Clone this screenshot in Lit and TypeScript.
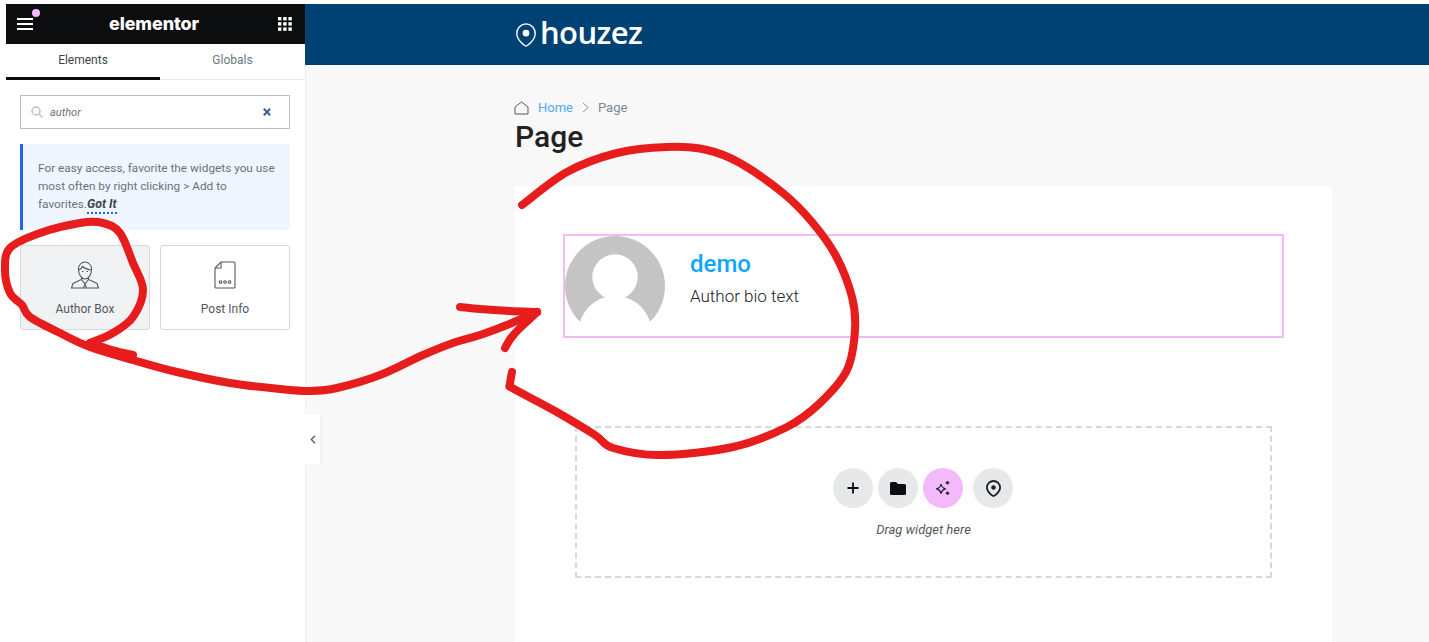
import { LitElement, html, css, svg } from "lit";
import { customElement } from "lit/decorators.js";

type Pt = [number, number];

/* Catmull-Rom through the points of a hand-drawn stroke, as cubic beziers. */
function smooth(p: Pt[]): string {
  let d = `M${p[0][0]} ${p[0][1]}`;
  for (let i = 0; i < p.length - 1; i++) {
    const a = p[Math.max(i - 1, 0)];
    const b = p[i];
    const c = p[i + 1];
    const e = p[Math.min(i + 2, p.length - 1)];
    const c1x = b[0] + (c[0] - a[0]) / 6;
    const c1y = b[1] + (c[1] - a[1]) / 6;
    const c2x = c[0] - (e[0] - b[0]) / 6;
    const c2y = c[1] - (e[1] - b[1]) / 6;
    d += `C${c1x.toFixed(1)} ${c1y.toFixed(1)} ${c2x.toFixed(1)} ${c2y.toFixed(1)} ${c[0]} ${c[1]}`;
  }
  return d;
}

const LOOP_HEAD: Pt[] = [[133, 355], [112, 350], [90, 343]];
const LOOP: Pt[] = [[90, 343], [113, 333], [133, 317], [143, 290], [133, 263], [120, 233], [103, 223], [80, 223], [40, 233], [10, 248], [5, 270], [10, 293], [22, 305], [30, 317], [60, 333], [90, 347], [133, 360], [177, 372], [230, 383], [280, 389], [310, 391], [337, 388], [380, 375], [423, 355], [453, 343], [480, 335], [507, 325], [537, 312]];
const ARROW_TOP: Pt[] = [[460, 307], [480, 309], [510, 311], [537, 312]];
const ARROW_LOW: Pt[] = [[537, 312], [520, 328], [511, 338], [505, 348]];
const RING: Pt[] = [[522, 205], [567, 172], [617, 153], [667, 147], [707, 150], [740, 163], [783, 193], [812, 222], [836, 256], [852, 297], [855, 330], [847, 370], [820, 403], [787, 427], [733, 447], [660, 455], [613, 448], [595, 435], [555, 411], [514, 389], [510, 385], [512, 372]];

@customElement("app-root")
export class AppRoot extends LitElement {
  static styles = css`
    :host { display: block; position: relative; width: 1429px; height: 642px; overflow: hidden; background: #fff; font-family: Roboto, "Liberation Sans", sans-serif; }
    * { box-sizing: border-box; }
    .page { display: flex; height: 642px; padding: 4px 0 0 6px; }
    .panel { width: 299px; flex: none; display: flex; flex-direction: column; background: #fff; }
    .topbar { height: 40px; background: #0c0d0e; display: flex; align-items: center; justify-content: space-between; padding: 0 13px 0 11px; position: relative; color: #fff; }
    .dot { position: absolute; left: 26px; top: 5px; width: 8px; height: 8px; border-radius: 50%; background: #f3b9fb; }
    .brand { font-family: Inter, "Open Sans", sans-serif; font-weight: 800; font-size: 18px; letter-spacing: -0.1px; line-height: 1; margin-right: 3px; }
    .tabs { display: flex; height: 36px; border-bottom: 1px solid #e6e8ea; }
    .tab { width: 145px; text-align: center; font-size: 12px; line-height: 32px; color: #6d7882; height: 36px; }
    .tab.active { width: 154px; color: #3f444b; border-bottom: 3px solid #0c0d0e; }
    .body { padding: 15px 15px 0 14px; display: flex; flex-direction: column; }
    .search { height: 34px; border: 1px solid #babfc5; display: flex; align-items: center; padding: 0 18px 0 10px; gap: 7px; font-size: 11px; font-style: italic; color: #69727d; }
    .search span { flex: 1; }
    .tip { margin-top: 15px; height: 86px; background: #f0f6ff; border-left: 3px solid #2563eb; border-radius: 0 3px 3px 0; padding: 15px 10px 0 15px; font-size: 11.8px; line-height: 18px; color: #69727d; }
    .tip b { font-style: italic; font-size: 12.4px; color: #3f444b; border-bottom: 2px dotted #2563eb; padding-bottom: 1px; }
    .grid { margin-top: 15px; display: grid; grid-template-columns: 130px 130px; gap: 10px; }
    .w { height: 85px; border: 1px solid #d5d8dc; border-radius: 3px; background: #fff; display: flex; flex-direction: column; align-items: center; font-size: 12px; color: #515962; padding-top: 14px; gap: 11px; }
    .w.sel { background: #f1f2f3; }
    .w svg { display: block; }
    .w span { line-height: 16px; }
    .main { flex: 1; display: flex; flex-direction: column; position: relative; background: #f8f8f8; box-shadow: inset 1px 0 0 #eeeeee; }
    .header { height: 61px; background: #004274; flex: none; padding: 0 0 0 210px; display: flex; align-items: center; }
    .logo { display: flex; align-items: center; gap: 3px; color: #fff; }
    .logo span { font-family: "Open Sans", Inter, sans-serif; font-size: 31px; font-weight: 600; letter-spacing: -0.6px; line-height: 1; padding-bottom: 4px; }
    .wrap { margin-left: 210px; width: 817px; flex: 1; display: flex; flex-direction: column; }
    .crumbs { margin-top: 34px; display: flex; align-items: center; height: 17px; font-size: 13px; color: #808890; margin-left: -1px; }
    .crumbs .home { color: #53a6f5; margin-left: 9px; }
    .crumbs .sep { margin: 0 9px; display: flex; }
    .title { font-size: 30px; font-weight: 500; color: #222; line-height: 36px; margin: 3px 0 0; }
    .card { margin-top: 31px; flex: 1; background: #fff; padding: 48px 48px 0 48px; display: flex; flex-direction: column; }
    .author { width: 721px; height: 104px; border: 2px solid #f3b9fb; display: flex; }
    .avatar { width: 100px; height: 100px; flex: none; }
    .info { margin-left: 25px; padding-top: 13px; }
    .info h3 { margin: 0; font-size: 24px; font-weight: 500; line-height: 30px; color: #0ea5ff; }
    .info p { margin: 7px 0 0; font-size: 17px; line-height: 20px; font-weight: 300; color: #222; }
    .drop { margin: 88px 0 0 12px; width: 697px; height: 152px; border: 2px dashed #d5d8dc; display: flex; flex-direction: column; align-items: center; padding-top: 40px; }
    .btns { display: flex; margin-left: -1px; }
    .btn { width: 40px; height: 40px; border-radius: 50%; background: #e6e8ea; display: flex; align-items: center; justify-content: center; margin-right: 5px; }
    .btn.ai { background: #f3b9fb; margin-right: 10px; }
    .btn:last-child { margin-right: 0; }
    .hint { margin-top: 14px; font-size: 13px; font-style: italic; color: #515962; line-height: 16px; }
    .collapse { position: absolute; left: 0; top: 410px; width: 15px; height: 50px; background: #fff; display: flex; align-items: center; justify-content: center; box-shadow: 1px 0 2px rgba(0,0,0,0.05); }
    .ink { position: absolute; inset: 0; width: 1429px; height: 642px; pointer-events: none; }
    .ink path { fill: none; stroke: #e71c1c; stroke-width: 8; stroke-linecap: round; stroke-linejoin: round; }
  `;

  render() {
    return html`
      <div class="page">
        <aside class="panel">
          <div class="topbar">
            <svg width="16" height="14" viewBox="0 0 16 14"><path d="M0 2h16M0 7h16M0 12h16" stroke="#fff" stroke-width="2.2" fill="none"/></svg>
            <i class="dot"></i>
            <span class="brand">elementor</span>
            <svg width="14" height="14" viewBox="0 0 14 14" fill="#fff"><rect x="0" y="0" width="3.4" height="3.4"/><rect x="5.2" y="0" width="3.4" height="3.4"/><rect x="10.4" y="0" width="3.4" height="3.4"/><rect x="0" y="5.2" width="3.4" height="3.4"/><rect x="5.2" y="5.2" width="3.4" height="3.4"/><rect x="10.4" y="5.2" width="3.4" height="3.4"/><rect x="0" y="10.4" width="3.4" height="3.4"/><rect x="5.2" y="10.4" width="3.4" height="3.4"/><rect x="10.4" y="10.4" width="3.4" height="3.4"/></svg>
          </div>
          <div class="tabs"><div class="tab active">Elements</div><div class="tab">Globals</div></div>
          <div class="body">
            <div class="search">
              <svg width="12" height="12" viewBox="0 0 12 12" fill="none" stroke="#babfc5" stroke-width="1.4"><circle cx="5" cy="5" r="4"/><path d="M8 8l3.4 3.4"/></svg>
              <span>author</span>
              <svg width="8" height="8" viewBox="0 0 8 8" stroke="#3b5c9a" stroke-width="2" fill="none"><path d="M0.8 0.8l6.4 6.4M7.2 0.8l-6.4 6.4"/></svg>
            </div>
            <div class="tip">For easy access, favorite the widgets you use most often by right clicking > Add to favorites.<b>Got It</b></div>
            <div class="grid">
              <div class="w sel">
                <svg width="30" height="30" viewBox="0 0 30 30" fill="none" stroke="#515962" stroke-width="1.100"><path d="M8.500 9.500c-.5-4 3-7.500 6.500-7.500s7 3.500 6.500 7.500c0 5-3 9.500-6.500 9.500s-6.500-4.500-6.500-9.500z"/><path d="M8.500 10c2-.5 3.500-2 4-3.500 2 2 5.500 3 8.500 3.500"/><path d="M12 11.500h1.500M16.500 11.500h1.500"/><path d="M11.500 17.500v2L3 23.500 1.500 28h27L27 23.500l-8.500-4v-2"/><path d="M11.500 19.500L15 24l3.500-4.500M13.500 28l1.500-4 1.500 4"/></svg>
                <span>Author Box</span>
              </div>
              <div class="w">
                <svg width="30" height="30" viewBox="0 0 30 30" fill="none" stroke="#515962" stroke-width="1.100"><path d="M11 2h13a1 1 0 0 1 1 1v24a1 1 0 0 1-1 1H6a1 1 0 0 1-1-1V8z"/><path d="M5 8h6V2"/><circle cx="10.500" cy="22" r="1.300"/><circle cx="15" cy="22" r="1.300"/><circle cx="19.500" cy="22" r="1.300"/></svg>
                <span>Post Info</span>
              </div>
            </div>
          </div>
        </aside>
        <main class="main">
          <header class="header">
            <div class="logo">
              <svg width="22" height="24" viewBox="0 0 22 26" fill="none" stroke="#fff" stroke-width="1.500"><path d="M11 25c-1 0-2-1-3-1.800C4 20 1 16.500 1 11.500 1 5.500 5.500 1 11 1s10 4.500 10 10.500c0 5-3 8.500-7 11.700-1 .8-2 1.800-3 1.800z"/><circle cx="11" cy="11" r="3.600" fill="#fff" stroke="none"/></svg>
              <span>houzez</span>
            </div>
          </header>
          <div class="wrap">
            <div class="crumbs">
              <svg width="15" height="14" viewBox="0 0 15 14" fill="none" stroke="#54595f" stroke-width="1"><path d="M1 13V6l6.500-5L14 6v7z"/></svg>
              <span class="home">Home</span>
              <span class="sep"><svg width="7" height="11" viewBox="0 0 7 11" fill="none" stroke="#8b929a" stroke-width="1"><path d="M1 .8L6 5.500 1 10.200"/></svg></span>
              <span>Page</span>
            </div>
            <h1 class="title">Page</h1>
            <section class="card">
              <div class="author">
                <svg class="avatar" viewBox="0 0 100 100"><circle cx="50" cy="50" r="50" fill="#c4c4c4"/><circle cx="50" cy="41" r="22.700" fill="#fff"/><path d="M15 86c5-16 19-26 35-26s30 10 35 26v14H15z" fill="#fff"/></svg>
                <div class="info"><h3>demo</h3><p>Author bio text</p></div>
              </div>
              <div class="drop">
                <div class="btns">
                  <div class="btn"><svg width="14" height="14" viewBox="0 0 14 14" stroke="#0c0d0e" stroke-width="1.800"><path d="M7 1.500v11M1.500 7h11"/></svg></div>
                  <div class="btn"><svg width="16" height="13" viewBox="0 0 16 13" fill="#0c0d0e"><path d="M1.500 0h4.500l2 2h6.500A1.500 1.500 0 0 1 16 3.500v8a1.500 1.500 0 0 1-1.500 1.500h-13A1.500 1.500 0 0 1 0 11.500v-10A1.500 1.500 0 0 1 1.500 0z"/></svg></div>
                  <div class="btn ai"><svg width="18" height="18" viewBox="0 0 18 18" fill="none" stroke="#1b2230" stroke-width="1.200"><path d="M7 5c.5 3 1.800 4.300 4.800 4.800-3 .5-4.300 1.800-4.800 4.800-.5-3-1.800-4.300-4.800-4.800C5.200 9.300 6.500 8 7 5z"/><path d="M13.500 2v3.600M11.700 3.800h3.600M13.500 12.400V16M11.700 14.200h3.600" stroke-width="1.400"/></svg></div>
                  <div class="btn"><svg width="15" height="17" viewBox="0 0 16 18" fill="none" stroke="#1f2023" stroke-width="1.900"><path d="M8 17c-1 0-1.600-.8-2.400-1.400C3 13.500 1 11.500 1 8a7 7 0 0 1 14 0c0 3.500-2 5.500-4.600 7.600C9.600 16.200 9 17 8 17z"/><circle cx="8" cy="8" r="2.400" fill="#1f2023" stroke="none"/></svg></div>
                </div>
                <div class="hint">Drag widget here</div>
              </div>
            </section>
          </div>
          <div class="collapse"><svg width="6" height="9" viewBox="0 0 6 9" fill="none" stroke="#515962" stroke-width="1.300"><path d="M5 .8L1.300 4.500 5 8.200"/></svg></div>
        </main>
      </div>
      <svg class="ink" viewBox="0 0 1429 642">
        ${[LOOP_HEAD, LOOP, ARROW_TOP, ARROW_LOW, RING].map((p) => svg`<path d=${smooth(p)}></path>`)}
      </svg>
    `;
  }
}
